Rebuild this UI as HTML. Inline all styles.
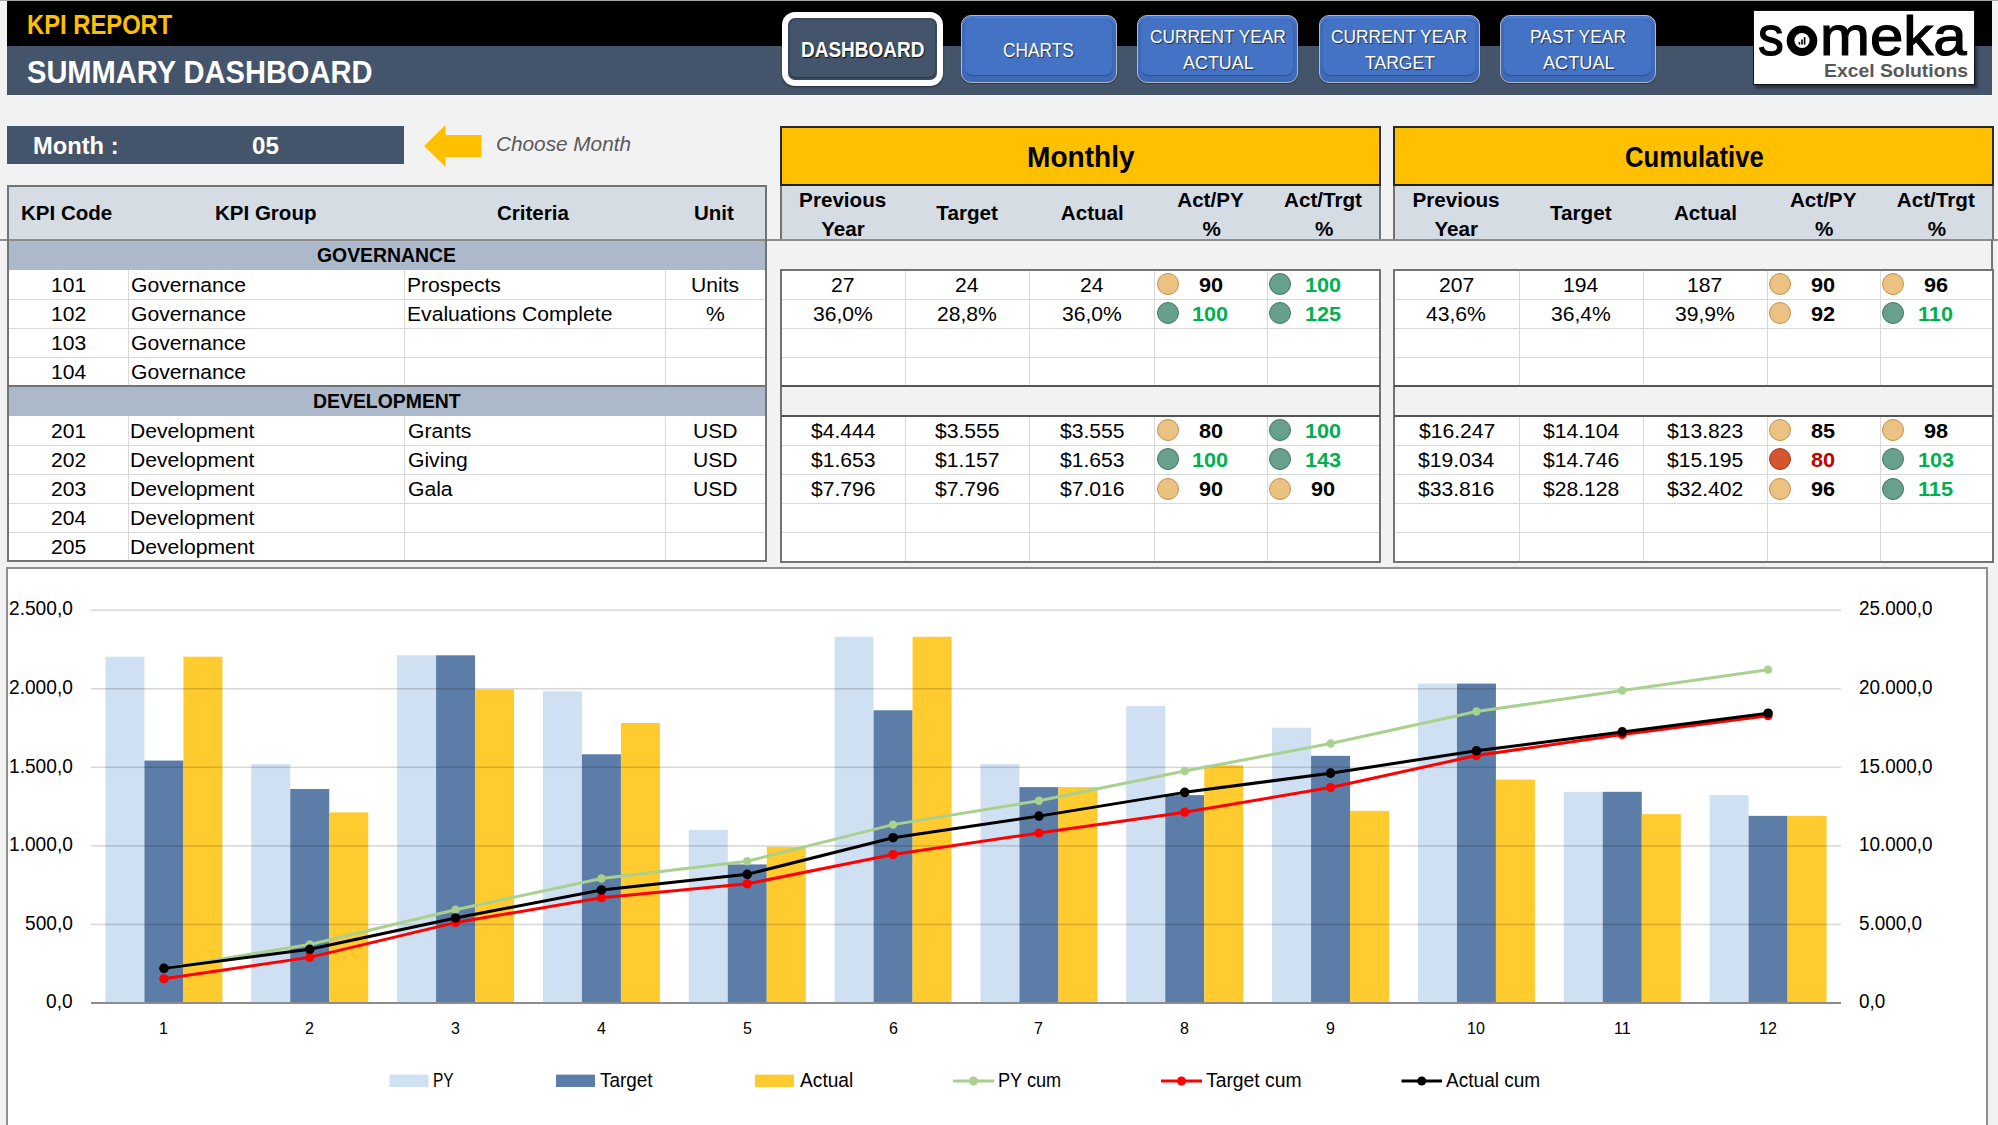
<!DOCTYPE html>
<html><head><meta charset="utf-8"><style>
html,body{margin:0;padding:0}
body{width:1998px;height:1125px;overflow:hidden;position:relative;background:#f2f2f2;font-family:"Liberation Sans",sans-serif}
.t{position:absolute;white-space:nowrap;line-height:1;transform-origin:0 0}
.r{position:absolute}
</style></head><body>
<div class="r" style="left:0px;top:0px;width:1998px;height:1px;background:#a6a6a6;"></div>
<div class="r" style="left:7px;top:1px;width:1985px;height:45px;background:#000;"></div>
<div class="r" style="left:7px;top:46px;width:1985px;height:49px;background:#44546A;"></div>
<div class="r" style="left:7px;top:95px;width:1985px;height:1px;background:#f8f8f8;"></div>
<div class="t" style="left:27.39px;top:10.51px;font-size:27.64px;font-weight:700;font-style:normal;transform:scaleX(0.8607);color:#FFC000;">KPI REPORT</div>
<div class="t" style="left:27.43px;top:57.42px;font-size:31.27px;font-weight:700;font-style:normal;transform:scaleX(0.9292);color:#fff;">SUMMARY DASHBOARD</div>
<div class="r" style="left:782px;top:12px;width:149px;height:61.5px;border:6px solid #fff;border-radius:13px;background:#3b4a5e;box-shadow:0 1px 2px rgba(0,0,0,.5)"></div>
<div class="r" style="left:790px;top:20px;width:145px;height:57px;border-radius:6px;background:#44546A;box-shadow:0 1px 1px rgba(0,0,0,.3)"></div>
<div class="t" style="left:801.22px;top:40.00px;font-size:21.53px;font-weight:700;font-style:normal;transform:scaleX(0.8825);color:#fff;text-shadow:1px 1px 1px rgba(0,0,0,.85)">DASHBOARD</div>
<div class="r" style="left:960.5px;top:15px;width:154px;height:65.5px;border:1.2px solid #aeb8c8;border-radius:10px;background:#3E6AB8;box-shadow:0 1px 1px rgba(0,0,0,.35), inset 0 3px 1px #4a7ad0"></div>
<div class="r" style="left:965px;top:20px;width:147px;height:55px;border-radius:7px;background:#4472C4;box-shadow:0 1px 1px rgba(0,0,0,.25)"></div>
<div class="t" style="left:1003.13px;top:40.14px;font-size:20.07px;font-weight:400;font-style:normal;transform:scaleX(0.8631);color:#fff;text-shadow:1px 1px 1px rgba(0,0,0,.6)">CHARTS</div>
<div class="r" style="left:1136.5px;top:15px;width:159px;height:65.5px;border:1.2px solid #aeb8c8;border-radius:10px;background:#3E6AB8;box-shadow:0 1px 1px rgba(0,0,0,.35), inset 0 3px 1px #4a7ad0"></div>
<div class="r" style="left:1141px;top:20px;width:152px;height:55px;border-radius:7px;background:#4472C4;box-shadow:0 1px 1px rgba(0,0,0,.25)"></div>
<div class="t" style="left:1149.64px;top:27.53px;font-size:18.91px;font-weight:400;font-style:normal;transform:scaleX(0.9149);color:#fff;text-shadow:1px 1px 1px rgba(0,0,0,.6)">CURRENT YEAR</div>
<div class="t" style="left:1182.86px;top:53.53px;font-size:18.91px;font-weight:400;font-style:normal;transform:scaleX(0.9481);color:#fff;text-shadow:1px 1px 1px rgba(0,0,0,.6)">ACTUAL</div>
<div class="r" style="left:1318.5px;top:15px;width:159px;height:65.5px;border:1.2px solid #aeb8c8;border-radius:10px;background:#3E6AB8;box-shadow:0 1px 1px rgba(0,0,0,.35), inset 0 3px 1px #4a7ad0"></div>
<div class="r" style="left:1323px;top:20px;width:152px;height:55px;border-radius:7px;background:#4472C4;box-shadow:0 1px 1px rgba(0,0,0,.25)"></div>
<div class="t" style="left:1331.13px;top:27.53px;font-size:18.91px;font-weight:400;font-style:normal;transform:scaleX(0.9183);color:#fff;text-shadow:1px 1px 1px rgba(0,0,0,.6)">CURRENT YEAR</div>
<div class="t" style="left:1364.50px;top:53.53px;font-size:18.91px;font-weight:400;font-style:normal;transform:scaleX(0.9287);color:#fff;text-shadow:1px 1px 1px rgba(0,0,0,.6)">TARGET</div>
<div class="r" style="left:1499.5px;top:15px;width:154px;height:65.5px;border:1.2px solid #aeb8c8;border-radius:10px;background:#3E6AB8;box-shadow:0 1px 1px rgba(0,0,0,.35), inset 0 3px 1px #4a7ad0"></div>
<div class="r" style="left:1504px;top:20px;width:147px;height:55px;border-radius:7px;background:#4472C4;box-shadow:0 1px 1px rgba(0,0,0,.25)"></div>
<div class="t" style="left:1530.36px;top:27.53px;font-size:18.91px;font-weight:400;font-style:normal;transform:scaleX(0.9233);color:#fff;text-shadow:1px 1px 1px rgba(0,0,0,.6)">PAST YEAR</div>
<div class="t" style="left:1542.95px;top:53.53px;font-size:18.91px;font-weight:400;font-style:normal;transform:scaleX(0.9603);color:#fff;text-shadow:1px 1px 1px rgba(0,0,0,.6)">ACTUAL</div>
<div class="r" style="left:1753px;top:10px;width:220px;height:73px;background:#fff;border:1px solid #111;box-shadow:2px 3px 3px rgba(0,0,0,.45)"></div>
<div class="t" style="left:1757.98px;top:8.57px;font-size:55.56px;font-weight:400;font-style:normal;transform:scaleX(0.9297);color:#000;-webkit-text-stroke:1.2px #000">s</div>
<div class="t" style="left:1819.96px;top:8.57px;font-size:55.56px;font-weight:400;font-style:normal;transform:scaleX(1.0783);color:#000;-webkit-text-stroke:1.2px #000">meka</div>
<svg class="r" style="left:1780px;top:20px" width="45" height="45"><circle cx="22" cy="20.7" r="15.3" fill="#000"/><circle cx="22" cy="20.5" r="7.6" fill="#fff"/><rect x="18.6" y="22" width="1.6" height="2.6" fill="#000"/><rect x="21.2" y="19.5" width="1.6" height="5.1" fill="#000"/><rect x="23.8" y="17" width="1.6" height="7.6" fill="#000"/></svg>
<div class="t" style="left:1823.69px;top:62.23px;font-size:18.91px;font-weight:700;font-style:normal;transform:scaleX(1.0235);color:#595959;">Excel Solutions</div>
<div class="r" style="left:7px;top:126px;width:397px;height:38px;background:#44546A;"></div>
<div class="t" style="left:33.10px;top:134.00px;font-size:24.00px;font-weight:700;font-style:normal;transform:scaleX(0.9874);color:#fff;">Month :</div>
<div class="t" style="left:252.33px;top:134.00px;font-size:24.00px;font-weight:700;font-style:normal;transform:scaleX(1.0072);color:#fff;">05</div>
<svg class="r" style="left:0;top:0" width="500" height="200"><polygon points="424,146 445.5,125 445.5,135 481.5,135 481.5,157 445.5,157 445.5,167" fill="#FFC000"/></svg>
<div class="t" style="left:495.86px;top:133.07px;font-size:21.09px;font-weight:400;font-style:italic;transform:scaleX(0.9849);color:#595959;">Choose Month</div>
<div class="r" style="left:7px;top:185px;width:760px;height:55px;background:#D6DCE4;"></div>
<div class="r" style="left:7px;top:185px;width:760px;height:2px;background:#737373;"></div>
<div class="r" style="left:0px;top:239px;width:1998px;height:2px;background:#8c8c8c;"></div>
<div class="r" style="left:7px;top:241px;width:760px;height:29px;background:#ACB9CA;"></div>
<div class="r" style="left:7px;top:270px;width:760px;height:116px;background:#fff;"></div>
<div class="r" style="left:7px;top:386px;width:760px;height:30px;background:#ACB9CA;"></div>
<div class="r" style="left:7px;top:416px;width:760px;height:146px;background:#fff;"></div>
<div class="r" style="left:9px;top:299px;width:756px;height:1px;background:#d9d9d9;"></div>
<div class="r" style="left:9px;top:328px;width:756px;height:1px;background:#d9d9d9;"></div>
<div class="r" style="left:9px;top:357px;width:756px;height:1px;background:#d9d9d9;"></div>
<div class="r" style="left:9px;top:445px;width:756px;height:1px;background:#d9d9d9;"></div>
<div class="r" style="left:9px;top:474px;width:756px;height:1px;background:#d9d9d9;"></div>
<div class="r" style="left:9px;top:503px;width:756px;height:1px;background:#d9d9d9;"></div>
<div class="r" style="left:9px;top:532px;width:756px;height:1px;background:#d9d9d9;"></div>
<div class="r" style="left:7px;top:385px;width:760px;height:2px;background:#737373;"></div>
<div class="r" style="left:128px;top:270px;width:1px;height:115px;background:#d9d9d9;"></div>
<div class="r" style="left:128px;top:416px;width:1px;height:146px;background:#d9d9d9;"></div>
<div class="r" style="left:404px;top:270px;width:1px;height:115px;background:#d9d9d9;"></div>
<div class="r" style="left:404px;top:416px;width:1px;height:146px;background:#d9d9d9;"></div>
<div class="r" style="left:665px;top:270px;width:1px;height:115px;background:#d9d9d9;"></div>
<div class="r" style="left:665px;top:416px;width:1px;height:146px;background:#d9d9d9;"></div>
<div class="r" style="left:7px;top:185px;width:2px;height:377px;background:#737373;"></div>
<div class="r" style="left:765px;top:185px;width:2px;height:377px;background:#737373;"></div>
<div class="r" style="left:7px;top:560px;width:760px;height:2px;background:#737373;"></div>
<div class="t" style="left:21.42px;top:203.00px;font-size:20.95px;font-weight:700;font-style:normal;transform:scaleX(0.9800);color:#000;">KPI Code</div>
<div class="t" style="left:214.69px;top:203.00px;font-size:20.95px;font-weight:700;font-style:normal;transform:scaleX(0.9800);color:#000;">KPI Group</div>
<div class="t" style="left:497.39px;top:203.00px;font-size:20.95px;font-weight:700;font-style:normal;transform:scaleX(0.9800);color:#000;">Criteria</div>
<div class="t" style="left:694.08px;top:203.00px;font-size:20.95px;font-weight:700;font-style:normal;transform:scaleX(0.9800);color:#000;">Unit</div>
<div class="t" style="left:317.42px;top:245.04px;font-size:20.65px;font-weight:700;font-style:normal;transform:scaleX(0.9400);color:#000;">GOVERNANCE</div>
<div class="t" style="left:312.57px;top:391.04px;font-size:20.65px;font-weight:700;font-style:normal;transform:scaleX(0.9400);color:#000;">DEVELOPMENT</div>
<div class="t" style="left:50.80px;top:274.67px;font-size:20.51px;font-weight:400;font-style:normal;transform:scaleX(1.0300);color:#000;">101</div>
<div class="t" style="left:130.94px;top:274.67px;font-size:20.51px;font-weight:400;font-style:normal;transform:scaleX(1.0300);color:#000;">Governance</div>
<div class="t" style="left:406.96px;top:274.67px;font-size:20.51px;font-weight:400;font-style:normal;transform:scaleX(1.0300);color:#000;">Prospects</div>
<div class="t" style="left:691.00px;top:274.67px;font-size:20.51px;font-weight:400;font-style:normal;transform:scaleX(1.0300);color:#000;">Units</div>
<div class="t" style="left:50.82px;top:303.87px;font-size:20.51px;font-weight:400;font-style:normal;transform:scaleX(1.0300);color:#000;">102</div>
<div class="t" style="left:130.94px;top:303.87px;font-size:20.51px;font-weight:400;font-style:normal;transform:scaleX(1.0300);color:#000;">Governance</div>
<div class="t" style="left:406.96px;top:303.87px;font-size:20.51px;font-weight:400;font-style:normal;transform:scaleX(1.0300);color:#000;">Evaluations Complete</div>
<div class="t" style="left:706.10px;top:303.87px;font-size:20.51px;font-weight:400;font-style:normal;transform:scaleX(1.0300);color:#000;">%</div>
<div class="t" style="left:50.74px;top:333.07px;font-size:20.51px;font-weight:400;font-style:normal;transform:scaleX(1.0300);color:#000;">103</div>
<div class="t" style="left:130.94px;top:333.07px;font-size:20.51px;font-weight:400;font-style:normal;transform:scaleX(1.0300);color:#000;">Governance</div>
<div class="t" style="left:50.59px;top:362.27px;font-size:20.51px;font-weight:400;font-style:normal;transform:scaleX(1.0300);color:#000;">104</div>
<div class="t" style="left:130.94px;top:362.27px;font-size:20.51px;font-weight:400;font-style:normal;transform:scaleX(1.0300);color:#000;">Governance</div>
<div class="t" style="left:51.06px;top:420.67px;font-size:20.51px;font-weight:400;font-style:normal;transform:scaleX(1.0300);color:#000;">201</div>
<div class="t" style="left:130.26px;top:420.67px;font-size:20.51px;font-weight:400;font-style:normal;transform:scaleX(1.0300);color:#000;">Development</div>
<div class="t" style="left:407.64px;top:420.67px;font-size:20.51px;font-weight:400;font-style:normal;transform:scaleX(1.0300);color:#000;">Grants</div>
<div class="t" style="left:692.87px;top:420.67px;font-size:20.51px;font-weight:400;font-style:normal;transform:scaleX(1.0300);color:#000;">USD</div>
<div class="t" style="left:51.09px;top:449.87px;font-size:20.51px;font-weight:400;font-style:normal;transform:scaleX(1.0300);color:#000;">202</div>
<div class="t" style="left:130.26px;top:449.87px;font-size:20.51px;font-weight:400;font-style:normal;transform:scaleX(1.0300);color:#000;">Development</div>
<div class="t" style="left:407.64px;top:449.87px;font-size:20.51px;font-weight:400;font-style:normal;transform:scaleX(1.0300);color:#000;">Giving</div>
<div class="t" style="left:692.87px;top:449.87px;font-size:20.51px;font-weight:400;font-style:normal;transform:scaleX(1.0300);color:#000;">USD</div>
<div class="t" style="left:51.01px;top:479.07px;font-size:20.51px;font-weight:400;font-style:normal;transform:scaleX(1.0300);color:#000;">203</div>
<div class="t" style="left:130.26px;top:479.07px;font-size:20.51px;font-weight:400;font-style:normal;transform:scaleX(1.0300);color:#000;">Development</div>
<div class="t" style="left:407.64px;top:479.07px;font-size:20.51px;font-weight:400;font-style:normal;transform:scaleX(1.0300);color:#000;">Gala</div>
<div class="t" style="left:692.87px;top:479.07px;font-size:20.51px;font-weight:400;font-style:normal;transform:scaleX(1.0300);color:#000;">USD</div>
<div class="t" style="left:50.85px;top:508.27px;font-size:20.51px;font-weight:400;font-style:normal;transform:scaleX(1.0300);color:#000;">204</div>
<div class="t" style="left:130.26px;top:508.27px;font-size:20.51px;font-weight:400;font-style:normal;transform:scaleX(1.0300);color:#000;">Development</div>
<div class="t" style="left:50.98px;top:537.47px;font-size:20.51px;font-weight:400;font-style:normal;transform:scaleX(1.0300);color:#000;">205</div>
<div class="t" style="left:130.26px;top:537.47px;font-size:20.51px;font-weight:400;font-style:normal;transform:scaleX(1.0300);color:#000;">Development</div>
<div class="r" style="left:781px;top:127px;width:598.5px;height:58px;background:#FFC000;"></div>
<div class="r" style="left:781px;top:126px;width:598.5px;height:2px;background:#2a2a2a;"></div>
<div class="r" style="left:781px;top:184px;width:598.5px;height:2px;background:#1e1e1e;"></div>
<div class="r" style="left:781px;top:186px;width:598.5px;height:53px;background:#D6DCE4;"></div>
<div class="r" style="left:780px;top:126px;width:2px;height:60px;background:#2a2a2a;"></div>
<div class="r" style="left:1378.5px;top:126px;width:2.0px;height:60px;background:#2a2a2a;"></div>
<div class="r" style="left:780px;top:186px;width:2px;height:53px;background:#737373;"></div>
<div class="r" style="left:1378.5px;top:186px;width:2.0px;height:53px;background:#737373;"></div>
<div class="t" style="left:1026.62px;top:142.60px;font-size:28.95px;font-weight:700;font-style:normal;transform:scaleX(0.9700);color:#000;">Monthly</div>
<div class="t" style="left:799.11px;top:189.94px;font-size:20.65px;font-weight:700;font-style:normal;transform:scaleX(1.0000);color:#000;">Previous</div>
<div class="t" style="left:821.13px;top:219.04px;font-size:20.65px;font-weight:700;font-style:normal;transform:scaleX(1.0000);color:#000;">Year</div>
<div class="t" style="left:936.37px;top:203.24px;font-size:20.65px;font-weight:700;font-style:normal;transform:scaleX(1.0000);color:#000;">Target</div>
<div class="t" style="left:1060.76px;top:203.24px;font-size:20.65px;font-weight:700;font-style:normal;transform:scaleX(1.0000);color:#000;">Actual</div>
<div class="t" style="left:1177.24px;top:189.94px;font-size:20.65px;font-weight:700;font-style:normal;transform:scaleX(1.0000);color:#000;">Act/PY</div>
<div class="t" style="left:1202.43px;top:219.04px;font-size:20.65px;font-weight:700;font-style:normal;transform:scaleX(1.0000);color:#000;">%</div>
<div class="t" style="left:1284.01px;top:189.94px;font-size:20.65px;font-weight:700;font-style:normal;transform:scaleX(1.0000);color:#000;">Act/Trgt</div>
<div class="t" style="left:1314.98px;top:219.04px;font-size:20.65px;font-weight:700;font-style:normal;transform:scaleX(1.0000);color:#000;">%</div>
<div class="r" style="left:781px;top:270px;width:598.5px;height:292px;background:#fff;"></div>
<div class="r" style="left:781px;top:386px;width:598.5px;height:30px;background:#f2f2f2;"></div>
<div class="r" style="left:782px;top:299px;width:596.5px;height:1px;background:#d9d9d9;"></div>
<div class="r" style="left:782px;top:328px;width:596.5px;height:1px;background:#d9d9d9;"></div>
<div class="r" style="left:782px;top:357px;width:596.5px;height:1px;background:#d9d9d9;"></div>
<div class="r" style="left:782px;top:445px;width:596.5px;height:1px;background:#d9d9d9;"></div>
<div class="r" style="left:782px;top:474px;width:596.5px;height:1px;background:#d9d9d9;"></div>
<div class="r" style="left:782px;top:503px;width:596.5px;height:1px;background:#d9d9d9;"></div>
<div class="r" style="left:782px;top:532px;width:596.5px;height:1px;background:#d9d9d9;"></div>
<div class="r" style="left:905px;top:270px;width:1px;height:116px;background:#d9d9d9;"></div>
<div class="r" style="left:905px;top:416px;width:1px;height:146px;background:#d9d9d9;"></div>
<div class="r" style="left:1029px;top:270px;width:1px;height:116px;background:#d9d9d9;"></div>
<div class="r" style="left:1029px;top:416px;width:1px;height:146px;background:#d9d9d9;"></div>
<div class="r" style="left:1154px;top:270px;width:1px;height:116px;background:#d9d9d9;"></div>
<div class="r" style="left:1154px;top:416px;width:1px;height:146px;background:#d9d9d9;"></div>
<div class="r" style="left:1267px;top:270px;width:1px;height:116px;background:#d9d9d9;"></div>
<div class="r" style="left:1267px;top:416px;width:1px;height:146px;background:#d9d9d9;"></div>
<div class="r" style="left:780px;top:269px;width:600.5px;height:2px;background:#737373;"></div>
<div class="r" style="left:780px;top:561px;width:600.5px;height:2px;background:#737373;"></div>
<div class="r" style="left:780px;top:270px;width:2px;height:292px;background:#737373;"></div>
<div class="r" style="left:1378.5px;top:270px;width:2.0px;height:292px;background:#737373;"></div>
<div class="r" style="left:781px;top:385px;width:598.5px;height:2px;background:#555;"></div>
<div class="r" style="left:781px;top:415px;width:598.5px;height:2px;background:#555;"></div>
<div class="t" style="left:831.28px;top:274.67px;font-size:20.51px;font-weight:400;font-style:normal;transform:scaleX(1.0300);color:#000;">27</div>
<div class="t" style="left:955.19px;top:274.67px;font-size:20.51px;font-weight:400;font-style:normal;transform:scaleX(1.0300);color:#000;">24</div>
<div class="t" style="left:1079.89px;top:274.67px;font-size:20.51px;font-weight:400;font-style:normal;transform:scaleX(1.0300);color:#000;">24</div>
<div class="r" style="left:1156.6px;top:273.2px;width:20px;height:20px;border-radius:50%;background:#EBC281;border:1.6px solid #C4914A"></div>
<div class="t" style="left:1198.62px;top:274.54px;font-size:20.65px;font-weight:700;font-style:normal;transform:scaleX(1.0500);color:#000;">90</div>
<div class="r" style="left:1269.0px;top:273.2px;width:20px;height:20px;border-radius:50%;background:#67A18C;border:1.6px solid #3F7763"></div>
<div class="t" style="left:1304.82px;top:274.54px;font-size:20.65px;font-weight:700;font-style:normal;transform:scaleX(1.0500);color:#00B050;">100</div>
<div class="t" style="left:813.00px;top:303.87px;font-size:20.51px;font-weight:400;font-style:normal;transform:scaleX(1.0300);color:#000;">36,0%</div>
<div class="t" style="left:937.02px;top:303.87px;font-size:20.51px;font-weight:400;font-style:normal;transform:scaleX(1.0300);color:#000;">28,8%</div>
<div class="t" style="left:1061.85px;top:303.87px;font-size:20.51px;font-weight:400;font-style:normal;transform:scaleX(1.0300);color:#000;">36,0%</div>
<div class="r" style="left:1156.6px;top:302.4px;width:20px;height:20px;border-radius:50%;background:#67A18C;border:1.6px solid #3F7763"></div>
<div class="t" style="left:1192.27px;top:303.74px;font-size:20.65px;font-weight:700;font-style:normal;transform:scaleX(1.0500);color:#00B050;">100</div>
<div class="r" style="left:1269.0px;top:302.4px;width:20px;height:20px;border-radius:50%;background:#67A18C;border:1.6px solid #3F7763"></div>
<div class="t" style="left:1304.69px;top:303.74px;font-size:20.65px;font-weight:700;font-style:normal;transform:scaleX(1.0500);color:#00B050;">125</div>
<div class="t" style="left:810.89px;top:420.67px;font-size:20.51px;font-weight:400;font-style:normal;transform:scaleX(1.0300);color:#000;">$4.444</div>
<div class="t" style="left:935.17px;top:420.67px;font-size:20.51px;font-weight:400;font-style:normal;transform:scaleX(1.0300);color:#000;">$3.555</div>
<div class="t" style="left:1059.87px;top:420.67px;font-size:20.51px;font-weight:400;font-style:normal;transform:scaleX(1.0300);color:#000;">$3.555</div>
<div class="r" style="left:1156.6px;top:419.2px;width:20px;height:20px;border-radius:50%;background:#EBC281;border:1.6px solid #C4914A"></div>
<div class="t" style="left:1198.64px;top:420.54px;font-size:20.65px;font-weight:700;font-style:normal;transform:scaleX(1.0500);color:#000;">80</div>
<div class="r" style="left:1269.0px;top:419.2px;width:20px;height:20px;border-radius:50%;background:#67A18C;border:1.6px solid #3F7763"></div>
<div class="t" style="left:1304.82px;top:420.54px;font-size:20.65px;font-weight:700;font-style:normal;transform:scaleX(1.0500);color:#00B050;">100</div>
<div class="t" style="left:811.05px;top:449.87px;font-size:20.51px;font-weight:400;font-style:normal;transform:scaleX(1.0300);color:#000;">$1.653</div>
<div class="t" style="left:935.28px;top:449.87px;font-size:20.51px;font-weight:400;font-style:normal;transform:scaleX(1.0300);color:#000;">$1.157</div>
<div class="t" style="left:1059.90px;top:449.87px;font-size:20.51px;font-weight:400;font-style:normal;transform:scaleX(1.0300);color:#000;">$1.653</div>
<div class="r" style="left:1156.6px;top:448.4px;width:20px;height:20px;border-radius:50%;background:#67A18C;border:1.6px solid #3F7763"></div>
<div class="t" style="left:1192.27px;top:449.74px;font-size:20.65px;font-weight:700;font-style:normal;transform:scaleX(1.0500);color:#00B050;">100</div>
<div class="r" style="left:1269.0px;top:448.4px;width:20px;height:20px;border-radius:50%;background:#67A18C;border:1.6px solid #3F7763"></div>
<div class="t" style="left:1304.77px;top:449.74px;font-size:20.65px;font-weight:700;font-style:normal;transform:scaleX(1.0500);color:#00B050;">143</div>
<div class="t" style="left:811.05px;top:479.07px;font-size:20.51px;font-weight:400;font-style:normal;transform:scaleX(1.0300);color:#000;">$7.796</div>
<div class="t" style="left:935.20px;top:479.07px;font-size:20.51px;font-weight:400;font-style:normal;transform:scaleX(1.0300);color:#000;">$7.796</div>
<div class="t" style="left:1059.90px;top:479.07px;font-size:20.51px;font-weight:400;font-style:normal;transform:scaleX(1.0300);color:#000;">$7.016</div>
<div class="r" style="left:1156.6px;top:477.6px;width:20px;height:20px;border-radius:50%;background:#EBC281;border:1.6px solid #C4914A"></div>
<div class="t" style="left:1198.62px;top:478.94px;font-size:20.65px;font-weight:700;font-style:normal;transform:scaleX(1.0500);color:#000;">90</div>
<div class="r" style="left:1269.0px;top:477.6px;width:20px;height:20px;border-radius:50%;background:#EBC281;border:1.6px solid #C4914A"></div>
<div class="t" style="left:1311.17px;top:478.94px;font-size:20.65px;font-weight:700;font-style:normal;transform:scaleX(1.0500);color:#000;">90</div>
<div class="r" style="left:1394px;top:127px;width:598.5px;height:58px;background:#FFC000;"></div>
<div class="r" style="left:1394px;top:126px;width:598.5px;height:2px;background:#2a2a2a;"></div>
<div class="r" style="left:1394px;top:184px;width:598.5px;height:2px;background:#1e1e1e;"></div>
<div class="r" style="left:1394px;top:186px;width:598.5px;height:53px;background:#D6DCE4;"></div>
<div class="r" style="left:1393px;top:126px;width:2px;height:60px;background:#2a2a2a;"></div>
<div class="r" style="left:1991.5px;top:126px;width:2.0px;height:60px;background:#2a2a2a;"></div>
<div class="r" style="left:1393px;top:186px;width:2px;height:53px;background:#737373;"></div>
<div class="r" style="left:1991.5px;top:186px;width:2.0px;height:53px;background:#737373;"></div>
<div class="t" style="left:1625.28px;top:142.60px;font-size:28.95px;font-weight:700;font-style:normal;transform:scaleX(0.8900);color:#000;">Cumulative</div>
<div class="t" style="left:1412.41px;top:189.94px;font-size:20.65px;font-weight:700;font-style:normal;transform:scaleX(1.0000);color:#000;">Previous</div>
<div class="t" style="left:1434.43px;top:219.04px;font-size:20.65px;font-weight:700;font-style:normal;transform:scaleX(1.0000);color:#000;">Year</div>
<div class="t" style="left:1550.02px;top:203.24px;font-size:20.65px;font-weight:700;font-style:normal;transform:scaleX(1.0000);color:#000;">Target</div>
<div class="t" style="left:1673.91px;top:203.24px;font-size:20.65px;font-weight:700;font-style:normal;transform:scaleX(1.0000);color:#000;">Actual</div>
<div class="t" style="left:1789.89px;top:189.94px;font-size:20.65px;font-weight:700;font-style:normal;transform:scaleX(1.0000);color:#000;">Act/PY</div>
<div class="t" style="left:1815.08px;top:219.04px;font-size:20.65px;font-weight:700;font-style:normal;transform:scaleX(1.0000);color:#000;">%</div>
<div class="t" style="left:1896.86px;top:189.94px;font-size:20.65px;font-weight:700;font-style:normal;transform:scaleX(1.0000);color:#000;">Act/Trgt</div>
<div class="t" style="left:1927.83px;top:219.04px;font-size:20.65px;font-weight:700;font-style:normal;transform:scaleX(1.0000);color:#000;">%</div>
<div class="r" style="left:1394px;top:270px;width:598.5px;height:292px;background:#fff;"></div>
<div class="r" style="left:1394px;top:386px;width:598.5px;height:30px;background:#f2f2f2;"></div>
<div class="r" style="left:1395px;top:299px;width:596.5px;height:1px;background:#d9d9d9;"></div>
<div class="r" style="left:1395px;top:328px;width:596.5px;height:1px;background:#d9d9d9;"></div>
<div class="r" style="left:1395px;top:357px;width:596.5px;height:1px;background:#d9d9d9;"></div>
<div class="r" style="left:1395px;top:445px;width:596.5px;height:1px;background:#d9d9d9;"></div>
<div class="r" style="left:1395px;top:474px;width:596.5px;height:1px;background:#d9d9d9;"></div>
<div class="r" style="left:1395px;top:503px;width:596.5px;height:1px;background:#d9d9d9;"></div>
<div class="r" style="left:1395px;top:532px;width:596.5px;height:1px;background:#d9d9d9;"></div>
<div class="r" style="left:1519px;top:270px;width:1px;height:116px;background:#d9d9d9;"></div>
<div class="r" style="left:1519px;top:416px;width:1px;height:146px;background:#d9d9d9;"></div>
<div class="r" style="left:1643px;top:270px;width:1px;height:116px;background:#d9d9d9;"></div>
<div class="r" style="left:1643px;top:416px;width:1px;height:146px;background:#d9d9d9;"></div>
<div class="r" style="left:1767px;top:270px;width:1px;height:116px;background:#d9d9d9;"></div>
<div class="r" style="left:1767px;top:416px;width:1px;height:146px;background:#d9d9d9;"></div>
<div class="r" style="left:1880px;top:270px;width:1px;height:116px;background:#d9d9d9;"></div>
<div class="r" style="left:1880px;top:416px;width:1px;height:146px;background:#d9d9d9;"></div>
<div class="r" style="left:1393px;top:269px;width:600.5px;height:2px;background:#737373;"></div>
<div class="r" style="left:1393px;top:561px;width:600.5px;height:2px;background:#737373;"></div>
<div class="r" style="left:1393px;top:270px;width:2px;height:292px;background:#737373;"></div>
<div class="r" style="left:1991.5px;top:270px;width:2.0px;height:292px;background:#737373;"></div>
<div class="r" style="left:1394px;top:385px;width:598.5px;height:2px;background:#555;"></div>
<div class="r" style="left:1394px;top:415px;width:598.5px;height:2px;background:#555;"></div>
<div class="t" style="left:1438.69px;top:274.67px;font-size:20.51px;font-weight:400;font-style:normal;transform:scaleX(1.0300);color:#000;">207</div>
<div class="t" style="left:1562.69px;top:274.67px;font-size:20.51px;font-weight:400;font-style:normal;transform:scaleX(1.0300);color:#000;">194</div>
<div class="t" style="left:1687.12px;top:274.67px;font-size:20.51px;font-weight:400;font-style:normal;transform:scaleX(1.0300);color:#000;">187</div>
<div class="r" style="left:1769.2px;top:273.2px;width:20px;height:20px;border-radius:50%;background:#EBC281;border:1.6px solid #C4914A"></div>
<div class="t" style="left:1811.27px;top:274.54px;font-size:20.65px;font-weight:700;font-style:normal;transform:scaleX(1.0500);color:#000;">90</div>
<div class="r" style="left:1881.7px;top:273.2px;width:20px;height:20px;border-radius:50%;background:#EBC281;border:1.6px solid #C4914A"></div>
<div class="t" style="left:1923.96px;top:274.54px;font-size:20.65px;font-weight:700;font-style:normal;transform:scaleX(1.0500);color:#000;">96</div>
<div class="t" style="left:1426.46px;top:303.87px;font-size:20.51px;font-weight:400;font-style:normal;transform:scaleX(1.0300);color:#000;">43,6%</div>
<div class="t" style="left:1550.80px;top:303.87px;font-size:20.51px;font-weight:400;font-style:normal;transform:scaleX(1.0300);color:#000;">36,4%</div>
<div class="t" style="left:1675.00px;top:303.87px;font-size:20.51px;font-weight:400;font-style:normal;transform:scaleX(1.0300);color:#000;">39,9%</div>
<div class="r" style="left:1769.2px;top:302.4px;width:20px;height:20px;border-radius:50%;background:#EBC281;border:1.6px solid #C4914A"></div>
<div class="t" style="left:1811.24px;top:303.74px;font-size:20.65px;font-weight:700;font-style:normal;transform:scaleX(1.0500);color:#000;">92</div>
<div class="r" style="left:1881.7px;top:302.4px;width:20px;height:20px;border-radius:50%;background:#67A18C;border:1.6px solid #3F7763"></div>
<div class="t" style="left:1918.27px;top:303.74px;font-size:20.65px;font-weight:700;font-style:normal;transform:scaleX(1.0500);color:#00B050;">110</div>
<div class="t" style="left:1418.57px;top:420.67px;font-size:20.51px;font-weight:400;font-style:normal;transform:scaleX(1.0300);color:#000;">$16.247</div>
<div class="t" style="left:1542.83px;top:420.67px;font-size:20.51px;font-weight:400;font-style:normal;transform:scaleX(1.0300);color:#000;">$14.104</div>
<div class="t" style="left:1667.19px;top:420.67px;font-size:20.51px;font-weight:400;font-style:normal;transform:scaleX(1.0300);color:#000;">$13.823</div>
<div class="r" style="left:1769.2px;top:419.2px;width:20px;height:20px;border-radius:50%;background:#EBC281;border:1.6px solid #C4914A"></div>
<div class="t" style="left:1811.16px;top:420.54px;font-size:20.65px;font-weight:700;font-style:normal;transform:scaleX(1.0500);color:#000;">85</div>
<div class="r" style="left:1881.7px;top:419.2px;width:20px;height:20px;border-radius:50%;background:#EBC281;border:1.6px solid #C4914A"></div>
<div class="t" style="left:1923.91px;top:420.54px;font-size:20.65px;font-weight:700;font-style:normal;transform:scaleX(1.0500);color:#000;">98</div>
<div class="t" style="left:1418.33px;top:449.87px;font-size:20.51px;font-weight:400;font-style:normal;transform:scaleX(1.0300);color:#000;">$19.034</div>
<div class="t" style="left:1542.99px;top:449.87px;font-size:20.51px;font-weight:400;font-style:normal;transform:scaleX(1.0300);color:#000;">$14.746</div>
<div class="t" style="left:1667.16px;top:449.87px;font-size:20.51px;font-weight:400;font-style:normal;transform:scaleX(1.0300);color:#000;">$15.195</div>
<div class="r" style="left:1769.2px;top:448.4px;width:20px;height:20px;border-radius:50%;background:#D4552F;border:1.6px solid #A63C20"></div>
<div class="t" style="left:1811.29px;top:449.74px;font-size:20.65px;font-weight:700;font-style:normal;transform:scaleX(1.0500);color:#C00000;">80</div>
<div class="r" style="left:1881.7px;top:448.4px;width:20px;height:20px;border-radius:50%;background:#67A18C;border:1.6px solid #3F7763"></div>
<div class="t" style="left:1917.62px;top:449.74px;font-size:20.65px;font-weight:700;font-style:normal;transform:scaleX(1.0500);color:#00B050;">103</div>
<div class="t" style="left:1418.49px;top:479.07px;font-size:20.51px;font-weight:400;font-style:normal;transform:scaleX(1.0300);color:#000;">$33.816</div>
<div class="t" style="left:1542.99px;top:479.07px;font-size:20.51px;font-weight:400;font-style:normal;transform:scaleX(1.0300);color:#000;">$28.128</div>
<div class="t" style="left:1667.27px;top:479.07px;font-size:20.51px;font-weight:400;font-style:normal;transform:scaleX(1.0300);color:#000;">$32.402</div>
<div class="r" style="left:1769.2px;top:477.6px;width:20px;height:20px;border-radius:50%;background:#EBC281;border:1.6px solid #C4914A"></div>
<div class="t" style="left:1811.21px;top:478.94px;font-size:20.65px;font-weight:700;font-style:normal;transform:scaleX(1.0500);color:#000;">96</div>
<div class="r" style="left:1881.7px;top:477.6px;width:20px;height:20px;border-radius:50%;background:#67A18C;border:1.6px solid #3F7763"></div>
<div class="t" style="left:1918.14px;top:478.94px;font-size:20.65px;font-weight:700;font-style:normal;transform:scaleX(1.0500);color:#00B050;">115</div>
<div class="r" style="left:1991px;top:239px;width:2px;height:31px;background:#737373;"></div>
<div class="r" style="left:6px;top:568px;width:1982px;height:557px;background:#fff;border:1px solid #8a8a8a;border-bottom:none;box-sizing:border-box"></div>
<div class="r" style="left:6px;top:567px;width:1982px;height:2px;background:#8f8f8f;"></div>
<div class="r" style="left:6px;top:567px;width:2px;height:558px;background:#8f8f8f;"></div>
<div class="r" style="left:1986px;top:567px;width:2px;height:558px;background:#8f8f8f;"></div>
<svg class="r" style="left:0;top:0" width="1998" height="1125">
<rect x="105.42" y="656.71" width="39" height="346.29" fill="#D0E0F3"/>
<rect x="144.42" y="760.56" width="39" height="242.44" fill="#5B7DA8"/>
<rect x="183.42" y="656.71" width="39" height="346.29" fill="#FFCB2F"/>
<rect x="251.25" y="764.18" width="39" height="238.82" fill="#D0E0F3"/>
<rect x="290.25" y="789.00" width="39" height="214.00" fill="#5B7DA8"/>
<rect x="329.25" y="812.41" width="39" height="190.59" fill="#FFCB2F"/>
<rect x="397.08" y="655.29" width="39" height="347.71" fill="#D0E0F3"/>
<rect x="436.08" y="655.29" width="39" height="347.71" fill="#5B7DA8"/>
<rect x="475.08" y="689.55" width="39" height="313.45" fill="#FFCB2F"/>
<rect x="542.92" y="691.27" width="39" height="311.73" fill="#D0E0F3"/>
<rect x="581.92" y="754.28" width="39" height="248.72" fill="#5B7DA8"/>
<rect x="620.92" y="723.01" width="39" height="279.99" fill="#FFCB2F"/>
<rect x="688.75" y="829.85" width="39" height="173.15" fill="#D0E0F3"/>
<rect x="727.75" y="864.42" width="39" height="138.58" fill="#5B7DA8"/>
<rect x="766.75" y="846.82" width="39" height="156.18" fill="#FFCB2F"/>
<rect x="834.58" y="636.75" width="39" height="366.25" fill="#D0E0F3"/>
<rect x="873.58" y="710.29" width="39" height="292.71" fill="#5B7DA8"/>
<rect x="912.58" y="636.75" width="39" height="366.25" fill="#FFCB2F"/>
<rect x="980.42" y="764.18" width="39" height="238.82" fill="#D0E0F3"/>
<rect x="1019.42" y="787.12" width="39" height="215.88" fill="#5B7DA8"/>
<rect x="1058.42" y="787.12" width="39" height="215.88" fill="#FFCB2F"/>
<rect x="1126.25" y="705.89" width="39" height="297.11" fill="#D0E0F3"/>
<rect x="1165.25" y="795.13" width="39" height="207.87" fill="#5B7DA8"/>
<rect x="1204.25" y="765.28" width="39" height="237.72" fill="#FFCB2F"/>
<rect x="1272.08" y="727.73" width="39" height="275.27" fill="#D0E0F3"/>
<rect x="1311.08" y="755.85" width="39" height="247.15" fill="#5B7DA8"/>
<rect x="1350.08" y="810.84" width="39" height="192.16" fill="#FFCB2F"/>
<rect x="1417.92" y="683.58" width="39" height="319.42" fill="#D0E0F3"/>
<rect x="1456.92" y="683.58" width="39" height="319.42" fill="#5B7DA8"/>
<rect x="1495.92" y="779.58" width="39" height="223.42" fill="#FFCB2F"/>
<rect x="1563.75" y="791.83" width="39" height="211.17" fill="#D0E0F3"/>
<rect x="1602.75" y="791.83" width="39" height="211.17" fill="#5B7DA8"/>
<rect x="1641.75" y="814.14" width="39" height="188.86" fill="#FFCB2F"/>
<rect x="1709.58" y="795.13" width="39" height="207.87" fill="#D0E0F3"/>
<rect x="1748.58" y="815.87" width="39" height="187.13" fill="#5B7DA8"/>
<rect x="1787.58" y="815.87" width="39" height="187.13" fill="#FFCB2F"/>
<rect x="91" y="923.69" width="1750" height="1.5" fill="#000" fill-opacity="0.16"/>
<rect x="91" y="845.13" width="1750" height="1.5" fill="#000" fill-opacity="0.16"/>
<rect x="91" y="766.57" width="1750" height="1.5" fill="#000" fill-opacity="0.16"/>
<rect x="91" y="688.01" width="1750" height="1.5" fill="#000" fill-opacity="0.16"/>
<rect x="91" y="609.45" width="1750" height="1.5" fill="#000" fill-opacity="0.16"/>
<rect x="91" y="1002.00" width="1750" height="2" fill="#8c8c8c"/>
<polyline points="163.92,968.37 309.75,944.49 455.58,909.72 601.42,878.55 747.25,861.23 893.08,824.61 1038.92,800.72 1184.75,771.01 1330.58,743.48 1476.42,711.54 1622.25,690.43 1768.08,669.64" fill="none" stroke="#A9D18E" stroke-width="3" stroke-linejoin="round"/>
<circle cx="163.92" cy="968.37" r="4.2" fill="#A9D18E"/>
<circle cx="309.75" cy="944.49" r="4.2" fill="#A9D18E"/>
<circle cx="455.58" cy="909.72" r="4.2" fill="#A9D18E"/>
<circle cx="601.42" cy="878.55" r="4.2" fill="#A9D18E"/>
<circle cx="747.25" cy="861.23" r="4.2" fill="#A9D18E"/>
<circle cx="893.08" cy="824.61" r="4.2" fill="#A9D18E"/>
<circle cx="1038.92" cy="800.72" r="4.2" fill="#A9D18E"/>
<circle cx="1184.75" cy="771.01" r="4.2" fill="#A9D18E"/>
<circle cx="1330.58" cy="743.48" r="4.2" fill="#A9D18E"/>
<circle cx="1476.42" cy="711.54" r="4.2" fill="#A9D18E"/>
<circle cx="1622.25" cy="690.43" r="4.2" fill="#A9D18E"/>
<circle cx="1768.08" cy="669.64" r="4.2" fill="#A9D18E"/>
<polyline points="163.92,978.76 309.75,957.36 455.58,922.59 601.42,897.71 747.25,883.86 893.08,854.58 1038.92,833.00 1184.75,812.21 1330.58,787.49 1476.42,755.55 1622.25,734.43 1768.08,715.72" fill="none" stroke="#FF0000" stroke-width="3" stroke-linejoin="round"/>
<circle cx="163.92" cy="978.76" r="4.6" fill="#FF0000"/>
<circle cx="309.75" cy="957.36" r="4.6" fill="#FF0000"/>
<circle cx="455.58" cy="922.59" r="4.6" fill="#FF0000"/>
<circle cx="601.42" cy="897.71" r="4.6" fill="#FF0000"/>
<circle cx="747.25" cy="883.86" r="4.6" fill="#FF0000"/>
<circle cx="893.08" cy="854.58" r="4.6" fill="#FF0000"/>
<circle cx="1038.92" cy="833.00" r="4.6" fill="#FF0000"/>
<circle cx="1184.75" cy="812.21" r="4.6" fill="#FF0000"/>
<circle cx="1330.58" cy="787.49" r="4.6" fill="#FF0000"/>
<circle cx="1476.42" cy="755.55" r="4.6" fill="#FF0000"/>
<circle cx="1622.25" cy="734.43" r="4.6" fill="#FF0000"/>
<circle cx="1768.08" cy="715.72" r="4.6" fill="#FF0000"/>
<polyline points="163.92,968.37 309.75,949.31 455.58,917.97 601.42,889.97 747.25,874.35 893.08,837.73 1038.92,816.14 1184.75,792.36 1330.58,773.15 1476.42,750.81 1622.25,731.92 1768.08,713.21" fill="none" stroke="#000000" stroke-width="3" stroke-linejoin="round"/>
<circle cx="163.92" cy="968.37" r="4.8" fill="#000000"/>
<circle cx="309.75" cy="949.31" r="4.8" fill="#000000"/>
<circle cx="455.58" cy="917.97" r="4.8" fill="#000000"/>
<circle cx="601.42" cy="889.97" r="4.8" fill="#000000"/>
<circle cx="747.25" cy="874.35" r="4.8" fill="#000000"/>
<circle cx="893.08" cy="837.73" r="4.8" fill="#000000"/>
<circle cx="1038.92" cy="816.14" r="4.8" fill="#000000"/>
<circle cx="1184.75" cy="792.36" r="4.8" fill="#000000"/>
<circle cx="1330.58" cy="773.15" r="4.8" fill="#000000"/>
<circle cx="1476.42" cy="750.81" r="4.8" fill="#000000"/>
<circle cx="1622.25" cy="731.92" r="4.8" fill="#000000"/>
<circle cx="1768.08" cy="713.21" r="4.8" fill="#000000"/>
<rect x="389.5" y="1074.6" width="39" height="12.4" fill="#D0E0F3"/>
<rect x="556" y="1074.6" width="39" height="12.4" fill="#5B7DA8"/>
<rect x="755" y="1074.6" width="39" height="12.4" fill="#FFCB2F"/>
<rect x="953" y="1079.5" width="41" height="3" fill="#A9D18E"/>
<circle cx="973.5" cy="1081" r="4.5" fill="#A9D18E"/>
<rect x="1161" y="1079.5" width="41" height="3" fill="#FF0000"/>
<circle cx="1181.5" cy="1081" r="4.5" fill="#FF0000"/>
<rect x="1401.5" y="1079.5" width="40.5" height="3" fill="#000"/>
<circle cx="1421.7" cy="1081" r="4.5" fill="#000"/>
</svg>
<div class="t" style="left:8.66px;top:598.44px;font-size:20.65px;font-weight:400;font-style:normal;transform:scaleX(0.9270);color:#000;">2.500,0</div>
<div class="t" style="left:8.66px;top:677.00px;font-size:20.65px;font-weight:400;font-style:normal;transform:scaleX(0.9270);color:#000;">2.000,0</div>
<div class="t" style="left:8.66px;top:755.56px;font-size:20.65px;font-weight:400;font-style:normal;transform:scaleX(0.9270);color:#000;">1.500,0</div>
<div class="t" style="left:8.66px;top:834.12px;font-size:20.65px;font-weight:400;font-style:normal;transform:scaleX(0.9270);color:#000;">1.000,0</div>
<div class="t" style="left:24.60px;top:912.68px;font-size:20.65px;font-weight:400;font-style:normal;transform:scaleX(0.9270);color:#000;">500,0</div>
<div class="t" style="left:45.90px;top:991.24px;font-size:20.65px;font-weight:400;font-style:normal;transform:scaleX(0.9270);color:#000;">0,0</div>
<div class="t" style="left:1859.05px;top:598.44px;font-size:20.65px;font-weight:400;font-style:normal;transform:scaleX(0.9160);color:#000;">25.000,0</div>
<div class="t" style="left:1859.05px;top:677.00px;font-size:20.65px;font-weight:400;font-style:normal;transform:scaleX(0.9160);color:#000;">20.000,0</div>
<div class="t" style="left:1858.58px;top:755.56px;font-size:20.65px;font-weight:400;font-style:normal;transform:scaleX(0.9160);color:#000;">15.000,0</div>
<div class="t" style="left:1858.58px;top:834.12px;font-size:20.65px;font-weight:400;font-style:normal;transform:scaleX(0.9160);color:#000;">10.000,0</div>
<div class="t" style="left:1859.24px;top:912.68px;font-size:20.65px;font-weight:400;font-style:normal;transform:scaleX(0.9160);color:#000;">5.000,0</div>
<div class="t" style="left:1859.24px;top:991.24px;font-size:20.65px;font-weight:400;font-style:normal;transform:scaleX(0.9160);color:#000;">0,0</div>
<div class="t" style="left:159.25px;top:1021.26px;font-size:16.87px;font-weight:400;font-style:normal;transform:scaleX(0.9500);color:#000;">1</div>
<div class="t" style="left:305.30px;top:1021.26px;font-size:16.87px;font-weight:400;font-style:normal;transform:scaleX(0.9500);color:#000;">2</div>
<div class="t" style="left:451.18px;top:1021.26px;font-size:16.87px;font-weight:400;font-style:normal;transform:scaleX(0.9500);color:#000;">3</div>
<div class="t" style="left:597.01px;top:1021.26px;font-size:16.87px;font-weight:400;font-style:normal;transform:scaleX(0.9500);color:#000;">4</div>
<div class="t" style="left:742.80px;top:1021.26px;font-size:16.87px;font-weight:400;font-style:normal;transform:scaleX(0.9500);color:#000;">5</div>
<div class="t" style="left:888.58px;top:1021.26px;font-size:16.87px;font-weight:400;font-style:normal;transform:scaleX(0.9500);color:#000;">6</div>
<div class="t" style="left:1034.47px;top:1021.26px;font-size:16.87px;font-weight:400;font-style:normal;transform:scaleX(0.9500);color:#000;">7</div>
<div class="t" style="left:1180.30px;top:1021.26px;font-size:16.87px;font-weight:400;font-style:normal;transform:scaleX(0.9500);color:#000;">8</div>
<div class="t" style="left:1326.12px;top:1021.26px;font-size:16.87px;font-weight:400;font-style:normal;transform:scaleX(0.9500);color:#000;">9</div>
<div class="t" style="left:1467.22px;top:1021.26px;font-size:16.87px;font-weight:400;font-style:normal;transform:scaleX(0.9500);color:#000;">10</div>
<div class="t" style="left:1613.71px;top:1021.26px;font-size:16.87px;font-weight:400;font-style:normal;transform:scaleX(0.9500);color:#000;">11</div>
<div class="t" style="left:1758.99px;top:1021.26px;font-size:16.87px;font-weight:400;font-style:normal;transform:scaleX(0.9500);color:#000;">12</div>
<div class="t" style="left:433.23px;top:1069.84px;font-size:20.65px;font-weight:400;font-style:normal;transform:scaleX(0.7479);color:#000;">PY</div>
<div class="t" style="left:599.57px;top:1069.84px;font-size:20.65px;font-weight:400;font-style:normal;transform:scaleX(0.9155);color:#000;">Target</div>
<div class="t" style="left:799.95px;top:1069.84px;font-size:20.65px;font-weight:400;font-style:normal;transform:scaleX(0.9290);color:#000;">Actual</div>
<div class="t" style="left:997.50px;top:1069.84px;font-size:20.65px;font-weight:400;font-style:normal;transform:scaleX(0.8783);color:#000;">PY cum</div>
<div class="t" style="left:1205.56px;top:1069.84px;font-size:20.65px;font-weight:400;font-style:normal;transform:scaleX(0.9369);color:#000;">Target cum</div>
<div class="t" style="left:1445.95px;top:1069.84px;font-size:20.65px;font-weight:400;font-style:normal;transform:scaleX(0.9231);color:#000;">Actual cum</div>
</body></html>
